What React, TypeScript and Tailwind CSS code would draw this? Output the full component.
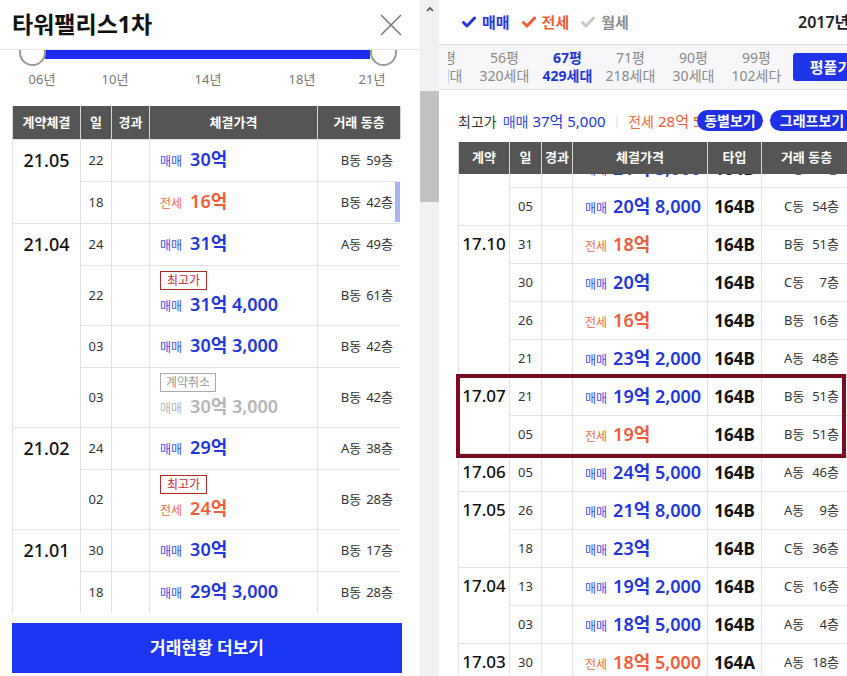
import React from "react";

type Deal = {
  day: string;
  kind: "매매" | "전세";
  price: string;
  dong: string;
  floor: string;
  type?: string;
  badge?: "최고가" | "계약취소";
};

type Group = { month: string; rows: Deal[] };

const leftGroups: Group[] = [
  {
    month: "21.05",
    rows: [
      { day: "22", kind: "매매", price: "30억", dong: "B동", floor: "59층" },
      { day: "18", kind: "전세", price: "16억", dong: "B동", floor: "42층" },
    ],
  },
  {
    month: "21.04",
    rows: [
      { day: "24", kind: "매매", price: "31억", dong: "A동", floor: "49층" },
      { day: "22", kind: "매매", price: "31억 4,000", dong: "B동", floor: "61층", badge: "최고가" },
      { day: "03", kind: "매매", price: "30억 3,000", dong: "B동", floor: "42층" },
      { day: "03", kind: "매매", price: "30억 3,000", dong: "B동", floor: "42층", badge: "계약취소" },
    ],
  },
  {
    month: "21.02",
    rows: [
      { day: "24", kind: "매매", price: "29억", dong: "A동", floor: "38층" },
      { day: "02", kind: "전세", price: "24억", dong: "B동", floor: "28층", badge: "최고가" },
    ],
  },
  {
    month: "21.01",
    rows: [
      { day: "30", kind: "매매", price: "30억", dong: "B동", floor: "17층" },
      { day: "18", kind: "매매", price: "29억 3,000", dong: "B동", floor: "28층" },
      { day: "11", kind: "매매", price: "29억", dong: "A동", floor: "33층" },
    ],
  },
];

const rightGroups: Group[] = [
  {
    month: "17.11",
    rows: [
      { day: "14", kind: "매매", price: "21억", type: "164B", dong: "A동", floor: "22층" },
      { day: "09", kind: "매매", price: "21억 5,000", type: "164B", dong: "B동", floor: "33층" },
      { day: "05", kind: "매매", price: "20억 8,000", type: "164B", dong: "C동", floor: "54층" },
    ],
  },
  {
    month: "17.10",
    rows: [
      { day: "31", kind: "전세", price: "18억", type: "164B", dong: "B동", floor: "51층" },
      { day: "30", kind: "매매", price: "20억", type: "164B", dong: "C동", floor: "7층" },
      { day: "26", kind: "전세", price: "16억", type: "164B", dong: "B동", floor: "16층" },
      { day: "21", kind: "매매", price: "23억 2,000", type: "164B", dong: "A동", floor: "48층" },
    ],
  },
  {
    month: "17.07",
    rows: [
      { day: "21", kind: "매매", price: "19억 2,000", type: "164B", dong: "B동", floor: "51층" },
      { day: "05", kind: "전세", price: "19억", type: "164B", dong: "B동", floor: "51층" },
    ],
  },
  {
    month: "17.06",
    rows: [{ day: "05", kind: "매매", price: "24억 5,000", type: "164B", dong: "A동", floor: "46층" }],
  },
  {
    month: "17.05",
    rows: [
      { day: "26", kind: "매매", price: "21억 8,000", type: "164B", dong: "A동", floor: "9층" },
      { day: "18", kind: "매매", price: "23억", type: "164B", dong: "C동", floor: "36층" },
    ],
  },
  {
    month: "17.04",
    rows: [
      { day: "13", kind: "매매", price: "19억 2,000", type: "164B", dong: "C동", floor: "16층" },
      { day: "03", kind: "매매", price: "18억 5,000", type: "164B", dong: "A동", floor: "4층" },
    ],
  },
  {
    month: "17.03",
    rows: [{ day: "30", kind: "전세", price: "18억 5,000", type: "164A", dong: "A동", floor: "18층" }],
  },
];

const tabs = [
  { py: "49평", units: "64세대" },
  { py: "56평", units: "320세대" },
  { py: "67평", units: "429세대", active: true },
  { py: "71평", units: "218세대" },
  { py: "90평", units: "30세대" },
  { py: "99평", units: "102세다" },
];

const Check = ({ color }: { color: string }) => (
  <svg width="14" height="12" viewBox="0 0 14 12" fill="none">
    <path d="M1.5 6.5 L5 10 L12.5 2" stroke={color} strokeWidth="3" strokeLinecap="round" strokeLinejoin="round" />
  </svg>
);

const Price = ({ deal, big }: { deal: Deal; big: string }) => {
  const cancelled = deal.badge === "계약취소";
  const label = cancelled ? "text-[#b5b5b5]" : deal.kind === "매매" ? "text-[#3a4ce2]" : "text-[#f26a45]";
  const value = cancelled ? "text-[#b5b5b5]" : deal.kind === "매매" ? "text-[#2335dc]" : "text-[#f25c38]";
  return (
    <div className="flex items-baseline">
      <span className={`text-[12px] ${label}`}>{deal.kind}</span>
      <span className={`ml-[8px] font-semibold ${big} ${value}`}>{deal.price}</span>
    </div>
  );
};

const Badge = ({ text }: { text: string }) =>
  text === "최고가" ? (
    <span className="inline-block border border-[#b0282e] px-[6px] text-[12px] leading-[17px] text-[#c42a30]">{text}</span>
  ) : (
    <span className="inline-block border border-[#aaaaaa] px-[5px] text-[12px] leading-[17px] text-[#999999]">{text}</span>
  );

const cell = "border border-[#e3e3e3]";

const LeftCols = () => (
  <colgroup>
    <col className="w-[68px]" />
    <col className="w-[31px]" />
    <col className="w-[38px]" />
    <col className="w-[168px]" />
    <col className="w-[83px]" />
  </colgroup>
);

const LeftTable = () => (
  <div className="ml-[12px] w-[388px]">
    <table className="w-[388px] table-fixed border-collapse">
      <LeftCols />
      <thead>
        <tr className="h-[33px] bg-[#555555] text-[13px] font-bold text-white">
          {["계약체결", "일", "경과", "체결가격", "거래 동층"].map((h) => (
            <th key={h} className="border-x border-[#d6d6d6] font-bold">
              {h}
            </th>
          ))}
        </tr>
      </thead>
    </table>
    <div className="relative h-[474px] overflow-hidden">
      <table className="w-[388px] table-fixed border-collapse">
        <LeftCols />
        <tbody>
          {leftGroups.map((g) =>
            g.rows.map((r, i) => (
              <tr key={g.month + i} className={r.badge ? "h-[60px]" : "h-[42px]"}>
                {i === 0 && (
                  <td rowSpan={g.rows.length} className={`${cell} pt-[7px] text-center align-top text-[18px] font-medium text-[#111]`}>
                    {g.month}
                  </td>
                )}
                <td className={`${cell} text-center text-[13px] text-[#333]`}>{r.day}</td>
                <td className={cell} />
                <td className={`${cell} pl-[10px]`}>
                  {r.badge && (
                    <div className="leading-none">
                      <Badge text={r.badge} />
                    </div>
                  )}
                  <div className={r.badge ? "mt-[1px] leading-[26px]" : "leading-[26px]"}>
                    <Price deal={r} big="text-[18px]" />
                  </div>
                </td>
                <td className={`${cell} pr-[7px] text-right text-[13px] text-[#333]`}>
                  {r.dong}
                  <span className="ml-[5px]">{r.floor}</span>
                </td>
              </tr>
            ))
          )}
        </tbody>
      </table>
      <div className="absolute right-0 top-[43px] h-[40px] w-[5px] bg-[#a9b3f5]" />
    </div>
  </div>
);

const YearSlider = () => (
  <div className="relative h-[56px] shrink-0 overflow-hidden">
    <div className="absolute left-[45px] top-0 h-[9px] w-[325px] bg-[#1b2cf0]" />
    <div className="absolute left-[19px] top-[-11px] h-[27px] w-[27px] rounded-full border-2 border-[#9a9a9a] bg-white" />
    <div className="absolute left-[370px] top-[-11px] h-[27px] w-[27px] rounded-full border-2 border-[#9a9a9a] bg-white" />
    {[
      ["06년", "left-[42px]"],
      ["10년", "left-[115px]"],
      ["14년", "left-[208px]"],
      ["18년", "left-[302px]"],
      ["21년", "left-[372px]"],
    ].map(([t, l]) => (
      <span key={t} className={`absolute top-[20px] -translate-x-1/2 text-[13px] leading-[18px] text-[#777] ${l}`}>
        {t}
      </span>
    ))}
  </div>
);

const LeftPanel = () => (
  <div className="flex w-[420px] shrink-0 flex-col">
    <div className="flex h-[50px] shrink-0 items-center justify-between border-b border-[#e6e6e6] pl-[12px] pr-[18px]">
      <h1 className="text-[23px] font-bold text-[#111]">타워팰리스1차</h1>
      <svg width="22" height="22" viewBox="0 0 22 22" fill="none">
        <path d="M1 1 L21 21 M21 1 L1 21" stroke="#7a7a7a" strokeWidth="1.6" />
      </svg>
    </div>
    <YearSlider />
    <LeftTable />
    <button className="ml-[12px] mt-[10px] h-[50px] w-[390px] bg-[#1c36f4] text-[17px] font-bold text-white">
      거래현황 더보기
    </button>
  </div>
);

const Scrollbar = () => (
  <div className="flex w-[19px] shrink-0 flex-col bg-[#f1f1f1]">
    <div className="flex h-[17px] items-center justify-center">
      <svg width="8" height="6" viewBox="0 0 8 6" fill="none">
        <path d="M1 5 L4 2 L7 5" stroke="#505050" strokeWidth="1.6" />
      </svg>
    </div>
    <div className="mt-[74px] h-[111px] bg-[#c1c1c1]" />
  </div>
);

const RightCols = () => (
  <colgroup>
    <col className="w-[51px]" />
    <col className="w-[32px]" />
    <col className="w-[31px]" />
    <col className="w-[135px]" />
    <col className="w-[54px]" />
    <col className="w-[90px]" />
  </colgroup>
);

const RightTable = () => (
  <div className="ml-[19px] w-[393px]">
    <table className="w-[393px] table-fixed border-collapse">
      <RightCols />
      <thead>
        <tr className="h-[32px] bg-[#555555] text-[13px] text-white">
          {["계약", "일", "경과", "체결가격", "타입", "거래 동층"].map((h) => (
            <th key={h} className="border-x border-[#d6d6d6] font-bold">
              {h}
            </th>
          ))}
        </tr>
      </thead>
    </table>
    <div className="h-[502px] overflow-hidden">
      <table className="mt-[-63px] w-[393px] table-fixed border-collapse">
        <RightCols />
        <tbody>
          {rightGroups.map((g) =>
            g.rows.map((r, i) => (
              <tr key={g.month + i} className="h-[38px]">
                {i === 0 && (
                  <td rowSpan={g.rows.length} className={`${cell} pt-[5px] text-center align-top text-[17px] font-medium text-[#111]`}>
                    {g.month}
                  </td>
                )}
                <td className={`${cell} text-center text-[13px] text-[#333]`}>{r.day}</td>
                <td className={cell} />
                <td className={`${cell} pl-[12px]`}>
                  <div className="flex items-baseline">
                    <span className={`text-[12px] ${r.kind === "매매" ? "text-[#3a4ce2]" : "text-[#f26a45]"}`}>{r.kind}</span>
                    <span className={`ml-[6px] text-[18px] font-semibold ${r.kind === "매매" ? "text-[#2335dc]" : "text-[#f25c38]"}`}>
                      {r.price}
                    </span>
                  </div>
                </td>
                <td className={`${cell} text-center text-[17px] font-bold text-[#111]`}>{r.type}</td>
                <td className={`${cell} pl-[22px] text-[13px] text-[#333]`}>
                  <div className="flex w-[55px]">
                    <span>{r.dong}</span>
                    <span className="ml-auto">{r.floor}</span>
                  </div>
                </td>
              </tr>
            ))
          )}
        </tbody>
      </table>
    </div>
  </div>
);

const RightPanel = () => (
  <div className="relative w-[408px] shrink-0 overflow-hidden">
    <div className="w-[470px]">
      <div className="flex h-[45px] items-center border-b border-[#dcdcdc] pl-[23px]">
        <div className="flex w-[336px] items-center gap-[12px] text-[15px] font-bold">
          <span className="flex items-center gap-[6px] text-[#2335dc]">
            <Check color="#2335dc" />
            매매
          </span>
          <span className="flex items-center gap-[6px] text-[#f25c38]">
            <Check color="#f25c38" />
            전세
          </span>
          <span className="flex items-center gap-[6px] text-[#8a8a8a]">
            <Check color="#c8c8c8" />
            월세
          </span>
        </div>
        <span className="text-[16px] font-semibold text-[#222]">2017년 10월</span>
      </div>

      <div className="flex h-[45px] items-center border-b border-[#e4e4e4] bg-[#f7f7f9] pl-[9px]">
        <div className="w-[337px] overflow-hidden">
          <div className="ml-[-38px] flex">
            {tabs.map((t) => (
              <div
                key={t.py}
                className={`w-[63px] shrink-0 text-center text-[14px] leading-[18px] ${
                  t.active ? "font-bold text-[#2235d6]" : "text-[#8a8a8a]"
                }`}
              >
                <div>{t.py}</div>
                <div>{t.units}</div>
              </div>
            ))}
          </div>
        </div>
        <button className="ml-[8px] h-[28px] w-[75px] rounded-[3px] bg-[#1f33e8] text-[15px] font-bold text-white">평풀기</button>
      </div>

      <div className="relative flex h-[52px] items-center pl-[19px] pt-[10px] text-[14px]">
        <span className="text-[#333]">최고가</span>
        <span className="ml-[6px] text-[#3a4ce2]">매매</span>
        <span className="ml-[4px] text-[15px] text-[#2335dc]">37억 5,000</span>
        <span className="mx-[8px] text-[12px] text-[#e0e0e0]">|</span>
        <span className="text-[#f26a45]">전세</span>
        <span className="ml-[4px] text-[15px] text-[#f25c38]">28억 5,000</span>
        <div className="absolute left-[258px] top-[20px] flex gap-[7px]">
          <span className="h-[21px] w-[66px] rounded-full bg-[#1f30e6] text-center text-[14px] font-bold leading-[21px] text-white">동별보기</span>
          <span className="h-[21px] w-[84px] rounded-full bg-[#1f30e6] text-center text-[14px] font-bold leading-[21px] text-white">그래프보기</span>
        </div>
      </div>

      <RightTable />
    </div>
    <div className="pointer-events-none absolute left-[17px] top-[374px] h-[84px] w-[390px] border-4 border-[#7b0d22]" />
  </div>
);

export default function App() {
  return (
    <div className="flex h-[676px] w-[847px] overflow-hidden bg-white font-['Noto_Sans','Noto_Sans_CJK_KR',sans-serif] text-[#222]">
      <LeftPanel />
      <Scrollbar />
      <RightPanel />
    </div>
  );
}
